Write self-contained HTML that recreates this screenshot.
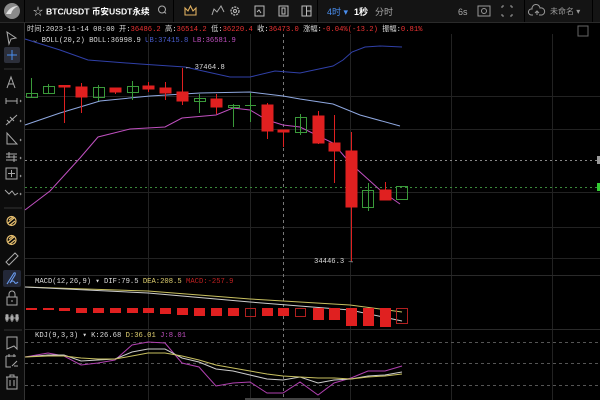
<!DOCTYPE html>
<html><head><meta charset="utf-8"><style>
html,body{margin:0;padding:0;background:#000;width:600px;height:400px;overflow:hidden;font-family:"Liberation Sans","Noto Sans CJK SC",sans-serif}
svg{display:block}
.m{font-family:"Liberation Mono","Noto Sans CJK SC",monospace;font-size:7.2px}
.t{font-family:"Liberation Sans","Noto Sans CJK SC",sans-serif}
</style></head><body>
<svg width="600" height="400" viewBox="0 0 600 400" xmlns="http://www.w3.org/2000/svg">
<rect width="600" height="400" fill="#000"/>
<rect x="0" y="0" width="600" height="22" fill="#141414"/>
<rect x="0" y="22" width="600" height="1" fill="#2a2a2a"/>
<rect x="24" y="0" width="1" height="22" fill="#000"/>
<rect x="173" y="0" width="1" height="22" fill="#000"/>
<rect x="317" y="0" width="1" height="22" fill="#000"/>
<rect x="524" y="0" width="1" height="22" fill="#000"/>
<rect x="592" y="0" width="1" height="22" fill="#000"/>
<circle cx="12" cy="11" r="8" fill="#8a8a8a"/>
<path d="M6 14 Q10 6 18 6 Q12 9 11 14 Z" fill="#e0e0e0"/>
<text x="33" y="15" fill="#ddd" font-size="10" class="t">☆</text>
<text x="46" y="14.5" fill="#fff" font-size="8.6" font-weight="bold" class="t">BTC/USDT 币安USDT永续</text>
<circle cx="162" cy="9.5" r="3.5" fill="none" stroke="#aaa" stroke-width="1"/><path d="M164.5 12 L166 13.5" stroke="#aaa"/>
<path d="M185 15 L185 8 L188 11 L190.5 6 L193 11 L196 8 L196 15 Z" fill="none" stroke="#e0b060" stroke-width="1.1"/>
<path d="M212 15 L214 9 L217 12 L221 6 L224 12" fill="none" stroke="#aaa" stroke-width="1"/>
<circle cx="235" cy="11" r="4" fill="none" stroke="#bbb" stroke-width="1.3" stroke-dasharray="2 1"/><circle cx="235" cy="11" r="1.5" fill="none" stroke="#bbb"/>
<rect x="255" y="6" width="9" height="10" fill="none" stroke="#bbb"/><path d="M257 12 L259 10 L261 13" stroke="#bbb" fill="none"/>
<rect x="279" y="6" width="9" height="10" fill="none" stroke="#bbb"/><rect x="282" y="8" width="3" height="6" fill="none" stroke="#bbb"/>
<rect x="302" y="6" width="9" height="10" fill="none" stroke="#bbb"/><path d="M306.5 6 V16 M306.5 11 H311" stroke="#bbb"/>
<text x="327" y="15" fill="#4a8ff0" font-size="9" class="t">4时 ▾</text>
<text x="354" y="15" fill="#fff" font-size="9" font-weight="bold" class="t">1秒</text>
<text x="375" y="15" fill="#aaa" font-size="9" class="t">分时</text>
<text x="458" y="15" fill="#aaa" font-size="9" class="t">6s</text>
<rect x="478" y="6" width="12" height="10" fill="none" stroke="#999"/><circle cx="484" cy="11" r="2.5" fill="none" stroke="#999"/>
<path d="M502 6 h2 M502 6 v2 M512 6 h-2 M512 6 v2 M502 16 h2 M502 16 v-2 M512 16 h-2 M512 16 v-2" stroke="#999"/>
<path d="M533 15 h-2 a3 3 0 0 1 1-6 a4 4 0 0 1 8-1 a3 3 0 0 1 2 7 h-3 M537 15 v-4 M535 13 l2-2 2 2" fill="none" stroke="#999"/>
<text x="550" y="14" fill="#999" font-size="8" class="t">未命名 ▾</text>

<rect x="0" y="23" width="24" height="377" fill="#0c0c0c"/>
<rect x="24" y="23" width="1" height="377" fill="#333"/>
<g stroke="#aaa" fill="none" stroke-width="1">
<path d="M7 32 L16 38 L11 39 L9 44 Z"/>
<rect x="4" y="47" width="16" height="16" rx="2" fill="#2c2f3a" stroke="none"/>
<path d="M12 50 V60 M7 55 H17" stroke="#4a8ff0"/>
<path d="M4 69 H22 M4 208 H22 M4 330 H22" stroke="#333"/>
<path d="M7 88 L11 77 L15 88 M8.5 84 H13.5"/>
<path d="M6 101 H17 M6 98 V104 M17 98 V104"/>
<path d="M6 125 L17 115 M7 120 L10 123 M10 117 L14 121"/>
<path d="M7 133 L7 144 L17 144 Z"/>
<path d="M6 154 H17 M6 157 H17 M6 160 H17 M9 152 V158 M14 155 V162"/>
<rect x="6" y="168" width="11" height="11"/><path d="M11.5 170 V177 M8 173.5 H15"/>
<path d="M5 190 L9 194 L12 191 L15 195 L18 193"/>
<path d="M20 100 l1 1 -1 1 M20 120 l1 1 -1 1 M20 139 l1 1 -1 1 M20 157 l1 1 -1 1 M20 175 l1 1 -1 1 M20 193 l1 1 -1 1" stroke="#999"/>
</g>
<g stroke="#e8c070" fill="none" stroke-width="1.2">
<circle cx="11.5" cy="221" r="4.5"/><path d="M8 223 L14 218 M9 220 L13 217 M10 225 L15 221"/>
<circle cx="11.5" cy="240" r="4.5"/><path d="M8 242 L14 237 M9 239 L13 236 M10 244 L15 240"/>
</g>
<path d="M6 262 L15 253 L18 256 L9 265 Z" stroke="#aaa" fill="none"/>
<rect x="3" y="270" width="18" height="17" rx="2" fill="#232838"/>
<path d="M7 284 L14 273 Q16 272 15 275 L10 283 Q13 279 15 283 Q16 284 18 282" stroke="#6a9cf0" fill="none" stroke-width="1.1"/>
<g stroke="#aaa" fill="none">
<rect x="7" y="297" width="10" height="8"/><path d="M9 297 V294 a3 3 0 0 1 6 0 V297 M12 300 V302"/>
<path d="M5 318 H19 M7 314 V322 M12 314 V322 M17 314 V322"/><rect x="6" y="315" width="2" height="5"/><rect x="11" y="316" width="2" height="4"/><rect x="16" y="315" width="2" height="5"/>
<path d="M7 337 H17 V349 L14 346 L7 349 Z"/>
<path d="M6 356 H16 M6 356 V367 H11 M9 354 V357 M14 354 V357 M12 366 L17 361 M14 366 H18"/>
<path d="M6 377 H18 M10 377 V375 H14 V377 M7 377 V389 H17 V377 M10 380 V386 M14 380 V386"/>
</g>

<text x="27" y="31" fill="#ddd" class="m">时间:2023-11-14 08:00  开:<tspan fill="#e33">36486.2</tspan>  高:<tspan fill="#e33">36514.2</tspan>  低:<tspan fill="#e33">36220.4</tspan>  收:<tspan fill="#e33">36473.0</tspan>  涨幅:<tspan fill="#e33">-0.04%(-13.2)</tspan>  振幅:<tspan fill="#e33">0.81%</tspan></text>
<rect x="578" y="26" width="10" height="10" fill="none" stroke="#666"/>
<text x="33" y="42" fill="#ddd" class="m">⌄ BOLL(20,2)   BOLL:36998.9  <tspan fill="#4a5ed0">UB:37415.8</tspan>  <tspan fill="#c050c0">LB:36581.9</tspan></text>

<g stroke="#222" stroke-width="1">
<path d="M148.5 34 V400 M250.5 34 V400 M350.5 34 V400 M451.5 34 V400 M552.5 34 V400"/>
<path d="M25 96.5 H600 M25 129.5 H600 M25 192.5 H600 M25 227.5 H600 M25 258.5 H600"/>
<path d="M25 275.5 H600 M25 329.5 H600" stroke="#2a2a2a"/>
</g>
<path d="M283.5 34 V400" stroke="#777" stroke-dasharray="3 3"/>
<path d="M25 160.5 H597" stroke="#888" stroke-dasharray="2 3"/>
<path d="M25 187.5 H597" stroke="#3a8a3a" stroke-dasharray="2 3"/>
<rect x="597" y="156" width="3" height="8" fill="#999"/>
<rect x="597" y="183" width="3" height="8" fill="#3c3"/>

<polyline fill="none" stroke="#3040a8" stroke-width="1" points="25,39 60,50 88,60 140,64 185,67 230,77 250,77 275,71 300,73 333,66 343,60 352,52 365,47 380,46 402,47"/>
<polyline fill="none" stroke="#8fa8e0" stroke-width="1" points="25,125 60,113 100,101 150,96 200,93 250,92 283,96 300,99 333,104 360,115 400,126"/>
<polyline fill="none" stroke="#c050c0" stroke-width="1" points="25,210 50,191 80,158 98,137 130,129 165,127 182,118 216,115 233,108 250,110 267,120 283,125 300,127 333,143 350,163 380,190 400,204"/>

<g stroke-width="1">
<g stroke="#3a9a3a" fill="none">
<path d="M31.5 78 V98 M48.5 84 V94 M98.5 85 V101 M132.5 81 V100 M199.5 94 V113 M233.5 104 V127 M250.5 93 V122 M300.5 114 V135 M368.5 183 V211"/>
<rect x="26.5" y="93.5" width="11" height="4"/><rect x="43.5" y="86.5" width="11" height="7"/><rect x="93.5" y="87.5" width="11" height="10"/><rect x="127.5" y="86.5" width="11" height="6"/><rect x="194.5" y="98.5" width="11" height="3"/><rect x="228.5" y="105.5" width="11" height="2"/><path d="M245 105.5 H256"/><rect x="295.5" y="117.5" width="11" height="15"/><rect x="362.5" y="190.5" width="11" height="17"/><rect x="396.5" y="186.5" width="11" height="13"/>
</g>
<g stroke="#e02020" fill="#e02020">
<path d="M64.5 86 V123 M81.5 83 V113 M115.5 88 V94 M148.5 82 V92 M165.5 82 V100 M182.5 68 V105 M216.5 94 V114 M267.5 103 V139 M283.5 130 V147 M318.5 111 V144 M334.5 115 V183 M351.5 132 V261 M385.5 182 V200"/>
<rect x="59" y="85.5" width="11" height="1.5"/><rect x="76" y="87" width="11" height="10"/><rect x="110" y="88" width="11" height="4"/><rect x="143" y="86" width="11" height="3"/><rect x="160" y="88" width="11" height="5"/><rect x="177" y="92" width="11" height="9"/><rect x="211" y="99" width="11" height="8"/><rect x="262" y="105" width="11" height="26"/><rect x="278" y="130" width="11" height="2"/><rect x="313" y="116" width="11" height="27"/><rect x="329" y="143" width="11" height="8"/><rect x="346" y="151" width="11" height="56"/><rect x="380" y="190" width="11" height="10"/>
</g>
</g>
<text x="186" y="69" fill="#ddd" class="m">← 37464.8</text>
<text x="314" y="263" fill="#ddd" class="m">34446.3 →</text>

<text x="35" y="283" fill="#ddd" class="m">MACD(12,26,9) ▾  DIF:79.5  <tspan fill="#e0d070">DEA:208.5</tspan>  <tspan fill="#c02020">MACD:-257.9</tspan></text>
<polyline fill="none" stroke="#c8c060" points="25,287 148,291 250,299 350,305 402,312"/>
<polyline fill="none" stroke="#ccc" points="25,287 148,293 250,302 350,310 402,321"/>
<g fill="#e02020">
<rect x="26" y="308" width="11" height="2"/><rect x="43" y="308" width="11" height="2"/><rect x="59" y="308" width="11" height="3"/><rect x="76" y="308" width="11" height="5"/><rect x="93" y="308" width="11" height="5"/><rect x="110" y="308" width="11" height="5"/><rect x="127" y="308" width="11" height="5"/><rect x="143" y="308" width="11" height="5"/><rect x="160" y="308" width="11" height="6"/><rect x="177" y="308" width="11" height="7"/><rect x="194" y="308" width="11" height="8"/><rect x="211" y="308" width="11" height="8"/><rect x="228" y="308" width="11" height="8"/><rect x="262" y="308" width="11" height="8"/><rect x="278" y="308" width="11" height="8"/><rect x="313" y="308" width="11" height="12"/><rect x="329" y="308" width="11" height="12"/><rect x="346" y="308" width="11" height="18"/><rect x="363" y="308" width="11" height="18"/><rect x="380" y="308" width="11" height="19"/>
</g>
<g fill="none" stroke="#b02020"><rect x="245.5" y="308.5" width="10" height="8"/><rect x="295.5" y="308.5" width="10" height="8"/><rect x="396.5" y="308.5" width="11" height="15"/></g>

<text x="35" y="337" fill="#ddd" class="m">KDJ(9,3,3) ▾  K:26.68  <tspan fill="#e0d070">D:36.01</tspan>  <tspan fill="#c050c0">J:8.01</tspan></text>
<g stroke="#555" stroke-dasharray="3 3"><path d="M25 342.5 H600 M25 363.5 H600 M25 385.5 H600"/></g>
<polyline fill="none" stroke="#b040b0" points="25,357 48,353 64,356 81,365 98,363 115,360 132,345 148,342 165,343 182,363 199,367 216,386 233,383 250,382 267,393 283,393 300,382 318,395 334,383 351,378 368,371 385,371 402,366"/>
<polyline fill="none" stroke="#ccc" points="25,357 48,355 64,355 81,361 98,360 115,359 132,352 148,349 165,349 182,358 199,362 216,369 233,371 250,375 267,379 283,380 300,377 318,383 334,380 351,379 368,376 385,375 402,372"/>
<polyline fill="none" stroke="#c8c060" points="25,357 48,356 64,356 81,358 98,359 115,359 132,356 148,353 165,353 182,356 199,360 216,365 233,368 250,371 267,374 283,376 300,377 318,378 334,378 351,379 368,377 385,376 402,374"/>
<rect x="245" y="398" width="75" height="2" fill="#444"/>
</svg>
</body></html>
